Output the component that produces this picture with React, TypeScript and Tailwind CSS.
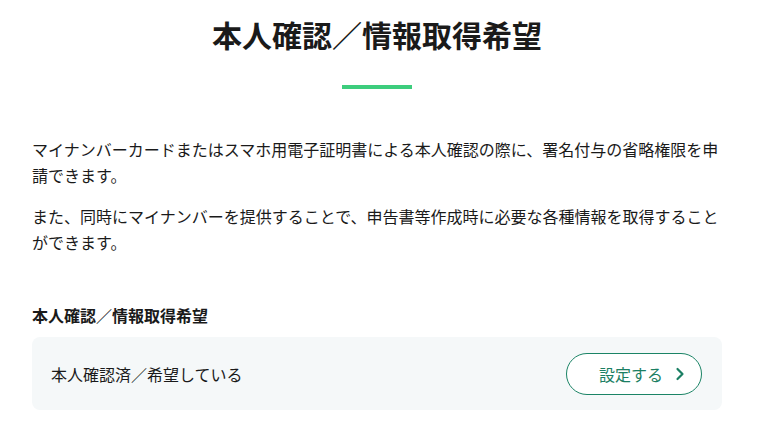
import React from "react";

export default function App() {
  return (
    <div
      className="w-[758px] h-[440px] bg-white text-[#1a1a1a] overflow-hidden"
      style={{ fontFamily: '"Noto Sans CJK JP", "Noto Sans", sans-serif' }}
    >
      <div className="w-[690px] ml-8">
        <h1 className="pt-[10px] text-center text-[30px] leading-[48px] font-bold tracking-[0px]">
          本人確認／情報取得希望
        </h1>
        <div className="flex justify-center mt-[27px]">
          <div className="w-[70px] h-[4px] bg-[#3dcd7d]" />
        </div>
        <div className="mt-[48px] text-[16px] leading-[25.6px]">
          <p>
            マイナンバーカードまたはスマホ用電子証明書による本人確認の際に、署名付与の省略権限を申請できます。
          </p>
          <p className="mt-[16px]">
            また、同時にマイナンバーを提供することで、申告書等作成時に必要な各種情報を取得することができます。
          </p>
        </div>
        <h2 className="mt-[48px] text-[16px] leading-[24px] font-bold">
          本人確認／情報取得希望
        </h2>
        <div className="mt-[10px] h-[73px] rounded-[8px] bg-[#f5f8f9] flex items-center justify-between pl-[19px] pr-[20px]">
          <span className="text-[16px] leading-[24px]">本人確認済／希望している</span>
          <button className="w-[136px] h-[42px] rounded-full border border-[#1b8466] bg-white flex items-center justify-end pr-[16px] gap-[12px] text-[#1b7f63] text-[16px]">
            <span>設定する</span>
            <svg width="10" height="14" viewBox="0 0 10 14" fill="none">
              <path d="M2.5 2 L7.5 7 L2.5 12" stroke="#1b7f63" strokeWidth="2.2" strokeLinecap="round" strokeLinejoin="round" />
            </svg>
          </button>
        </div>
      </div>
    </div>
  );
}
